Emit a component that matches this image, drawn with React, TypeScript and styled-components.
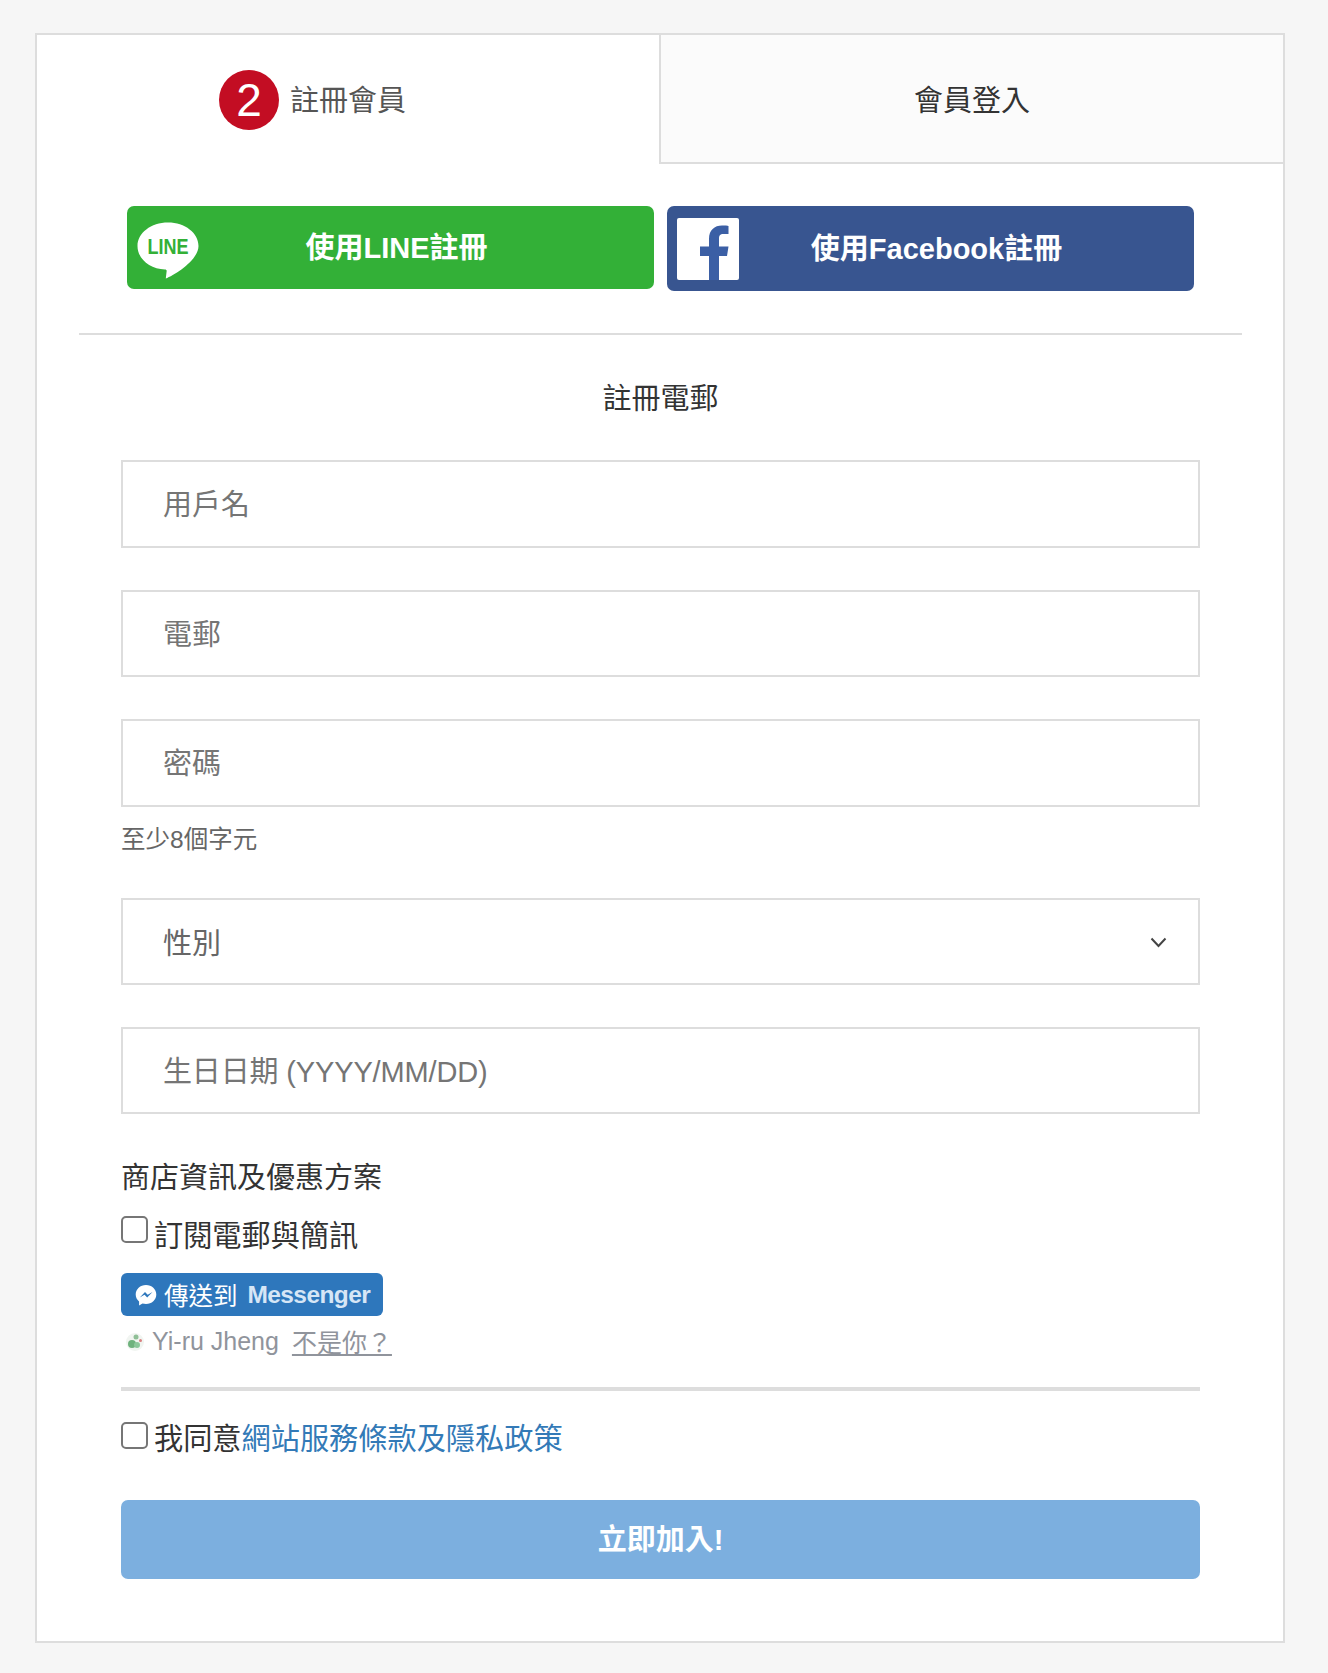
import { createGlobalStyle, styled } from "styled-components";

const FONT = `"Liberation Sans", "Noto Sans CJK TC", sans-serif`;

const GlobalStyle = createGlobalStyle`
  html, body {
    margin: 0;
    padding: 0;
    background: #f6f6f6;
  }
  * {
    box-sizing: border-box;
  }
`;

const Page = styled.div`
  width: 1328px;
  padding: 33px 43px 30px 35px;
  font-family: ${FONT};
  color: #333;
`;

const Card = styled.main`
  width: 1250px;
  background: #fff;
  border: 2px solid #ddd;
`;

const Tabs = styled.nav`
  display: flex;
  height: 129px;
`;

const Tab = styled.div<{ $active?: boolean }>`
  flex: 1;
  display: flex;
  align-items: center;
  justify-content: center;
  padding-top: ${(p) => (p.$active ? "2px" : "4px")};
  font-size: 29px;
  color: ${(p) => (p.$active ? "#555" : "#333")};
  background: ${(p) => (p.$active ? "#fff" : "#fbfbfb")};
  border-left: ${(p) => (p.$active ? "none" : "2px solid #ddd")};
  border-bottom: ${(p) => (p.$active ? "none" : "2px solid #ddd")};
`;

const TabLabel = styled.span`
  position: relative;
  line-height: 40px;
`;

const StepBadge = styled.span`
  position: absolute;
  right: calc(100% + 11px);
  top: -11px;
  width: 60px;
  height: 60px;
  border-radius: 50%;
  background: #c30d23;
  color: #fff;
  font-size: 46px;
  line-height: 60px;
  text-align: center;
`;

const SocialRow = styled.div`
  display: flex;
  align-items: flex-start;
  gap: 13px;
  margin: 42px 0 0 90px;
`;

const SocialButton = styled.a<{ $bg: string; $height: number }>`
  width: 527px;
  height: ${(p) => p.$height}px;
  display: flex;
  align-items: center;
  padding: 0 60px 0 10px;
  background: ${(p) => p.$bg};
  border-radius: 7px;
  color: #fff;
  font-size: 29px;
  font-weight: 700;
`;

const SocialIcon = styled.svg`
  flex: none;
  display: block;
  width: 62px;
  height: 62px;
`;

const SocialLabel = styled.span`
  flex: 1;
  padding-bottom: 5px;
  text-align: center;
`;

const Rule = styled.hr`
  height: 2px;
  margin: 42px 41px 0 42px;
  border: none;
  background: #ddd;
`;

const Form = styled.form`
  padding: 44px 83px 62px 84px;
`;

const FormTitle = styled.h2`
  margin: 0 0 41px;
  font-size: 29px;
  font-weight: 400;
  line-height: 40px;
  text-align: center;
`;

const TextInput = styled.input`
  display: block;
  width: 100%;
  height: 87.5px;
  margin-bottom: 42px;
  padding: 4px 40px 0;
  background: #fff;
  border: 2px solid #ddd;
  border-radius: 0;
  outline: none;
  font-family: ${FONT};
  font-size: 29px;
  color: #333;

  &::placeholder {
    color: #757575;
    opacity: 1;
  }
`;

const PasswordInput = styled(TextInput)`
  margin-bottom: 0;
`;

const BirthdayInput = styled(TextInput)`
  height: 87px;
  margin-bottom: 0;
  letter-spacing: -0.15px;
`;

const Helper = styled.p`
  margin: 18px 0 43.500px;
  font-size: 24.5px;
  line-height: 30px;
  color: #666;
`;

const SelectWrap = styled.div`
  position: relative;
  margin-bottom: 42px;
`;

const GenderSelect = styled.select`
  display: block;
  width: 100%;
  height: 87px;
  padding: 4px 40px 0;
  appearance: none;
  background: #fff;
  border: 2px solid #ddd;
  border-radius: 0;
  outline: none;
  font-family: ${FONT};
  font-size: 29px;
  color: #666;
`;

const Chevron = styled.svg`
  position: absolute;
  top: 39px;
  right: 33px;
  width: 17px;
  height: 11px;
  pointer-events: none;
`;

const SectionTitle = styled.h3`
  margin: 44px 0 17px;
  font-size: 29px;
  font-weight: 400;
  line-height: 40px;
`;

const CheckRow = styled.label`
  display: flex;
  align-items: flex-start;
  gap: 6px;
  font-size: 29.2px;
  line-height: 40px;
`;

const CheckBox = styled.input`
  flex: none;
  width: 27px;
  height: 27px;
  margin: 1px 0 0;
  appearance: none;
  background: #fff;
  border: 2px solid #767676;
  border-radius: 5px;
`;

const CheckText = styled.span<{ $nudge: number }>`
  margin-top: ${(p) => p.$nudge}px;
`;

const MessengerButton = styled.button`
  display: flex;
  align-items: center;
  width: 262px;
  height: 43px;
  margin-top: 17px;
  padding: 0 0 0 14px;
  background: #2e77bc;
  border: none;
  border-radius: 6px;
  color: #fff;
  font-family: ${FONT};
  font-size: 24.5px;
  white-space: nowrap;
`;

const MessengerIcon = styled.svg`
  flex: none;
  width: 22px;
  height: 22px;
  margin-right: 7px;
`;

const MessengerName = styled.span`
  margin-left: 10px;
  font-weight: 700;
  color: #d6e6f6;
  letter-spacing: -0.6px;
`;

const UserRow = styled.div`
  display: flex;
  align-items: center;
  height: 30px;
  margin: 10px 0 31px 4px;
  font-size: 25px;
  color: #90949c;
`;

const UserAvatar = styled.svg`
  flex: none;
  width: 20px;
  height: 20px;
  margin: 2px 7px 0 0;
`;

const NotYou = styled.a`
  margin-left: 13px;
  text-decoration: underline;
  text-underline-offset: 2px;
`;

const ThickRule = styled.hr`
  height: 4px;
  margin: 0 0 30px;
  border: none;
  background: #ddd;
`;

const PolicyLink = styled.a`
  color: #337ab7;
`;

const SubmitButton = styled.button`
  display: block;
  width: 100%;
  height: 79px;
  margin-top: 41px;
  padding: 0 0 6px;
  background: #7cafdf;
  border: none;
  border-radius: 7px;
  color: #fff;
  font-family: ${FONT};
  font-size: 29px;
  font-weight: 700;
`;

export default function App() {
  return (
    <Page>
      <GlobalStyle />
      <Card>
        <Tabs>
          <Tab $active>
            <TabLabel>
              <StepBadge>2</StepBadge>
              註冊會員
            </TabLabel>
          </Tab>
          <Tab>
            <TabLabel>會員登入</TabLabel>
          </Tab>
        </Tabs>

        <SocialRow>
          <SocialButton $bg="#33b037" $height={83}>
            <SocialIcon viewBox="0 0 62 62">
              <path
                d="M31 5.500C14 5.500.5 16 .5 29 .5 42 13 52 28 52.500c1.500 0 1.800.8 1.600 2l-.8 7C38 58 61.500 43 61.500 29 61.500 16 48 5.500 31 5.500z"
                fill="#fff"
              />
              <text
                x="31"
                y="36.500"
                textAnchor="middle"
                fontFamily="Liberation Sans, sans-serif"
                fontSize="22"
                fontWeight="700"
                textLength="41"
                lengthAdjust="spacingAndGlyphs"
                fill="#33b037"
              >
                LINE
              </text>
            </SocialIcon>
            <SocialLabel>使用LINE註冊</SocialLabel>
          </SocialButton>
          <SocialButton $bg="#385590" $height={85}>
            <SocialIcon viewBox="0 0 62 62">
              <rect x="0" y="0" width="62" height="62" rx="2" fill="#fff" />
              <path
                d="M32 62V38h-9v-9.500h9V21c0-9 5.500-13.500 13-13.500 3 0 5.500.2 6.500.4V16h-4.800c-4 0-4.700 2-4.700 4.800v7.700h9.500L50 38h-8v24z"
                fill="#3b5fa5"
              />
            </SocialIcon>
            <SocialLabel>使用Facebook註冊</SocialLabel>
          </SocialButton>
        </SocialRow>

        <Rule />

        <Form onSubmit={(e) => e.preventDefault()}>
          <FormTitle>註冊電郵</FormTitle>
          <TextInput placeholder="用戶名" />
          <TextInput placeholder="電郵" />
          <PasswordInput type="password" placeholder="密碼" />
          <Helper>至少8個字元</Helper>

          <SelectWrap>
            <GenderSelect defaultValue="">
              <option value="">性別</option>
              <option value="m">男</option>
              <option value="f">女</option>
            </GenderSelect>
            <Chevron viewBox="0 0 17 11">
              <path d="M1.500 1.500 8.500 9l7-7.500" fill="none" stroke="#444" strokeWidth="2" />
            </Chevron>
          </SelectWrap>

          <BirthdayInput placeholder="生日日期 (YYYY/MM/DD)" />

          <SectionTitle>商店資訊及優惠方案</SectionTitle>
          <CheckRow>
            <CheckBox type="checkbox" />
            <CheckText $nudge={1}>訂閱電郵與簡訊</CheckText>
          </CheckRow>

          <MessengerButton type="button">
            <MessengerIcon viewBox="0 0 22 22">
              <path
                d="M11 1C5.200 1 .7 5.200.7 10.500c0 2.900 1.300 5.300 3.400 7v3.900l3.400-1.900c1.100.3 2.300.5 3.500.5 5.800 0 10.300-4.200 10.300-9.500S16.800 1 11 1z"
                fill="#fff"
              />
              <path d="M4.800 13.500 10 8l2.700 2.700L17.500 8l-5.300 5.600-2.700-2.800z" fill="#2e77bc" />
            </MessengerIcon>
            傳送到
            <MessengerName>Messenger</MessengerName>
          </MessengerButton>

          <UserRow>
            <UserAvatar viewBox="0 0 20 20">
              <circle cx="10" cy="10" r="9" fill="#f1f5f1" />
              <circle cx="7" cy="12" r="4" fill="#6fb27d" />
              <circle cx="11" cy="5" r="2.500" fill="#8fbf96" />
              <circle cx="12" cy="13" r="3" fill="#8cc79a" />
              <circle cx="15.500" cy="8.500" r="1.500" fill="#d98080" />
            </UserAvatar>
            Yi-ru Jheng
            <NotYou>不是你？</NotYou>
          </UserRow>

          <ThickRule />

          <CheckRow>
            <CheckBox type="checkbox" />
            <CheckText $nudge={-2}>
              我同意<PolicyLink>網站服務條款及隱私政策</PolicyLink>
            </CheckText>
          </CheckRow>

          <SubmitButton type="submit">立即加入!</SubmitButton>
        </Form>
      </Card>
    </Page>
  );
}
